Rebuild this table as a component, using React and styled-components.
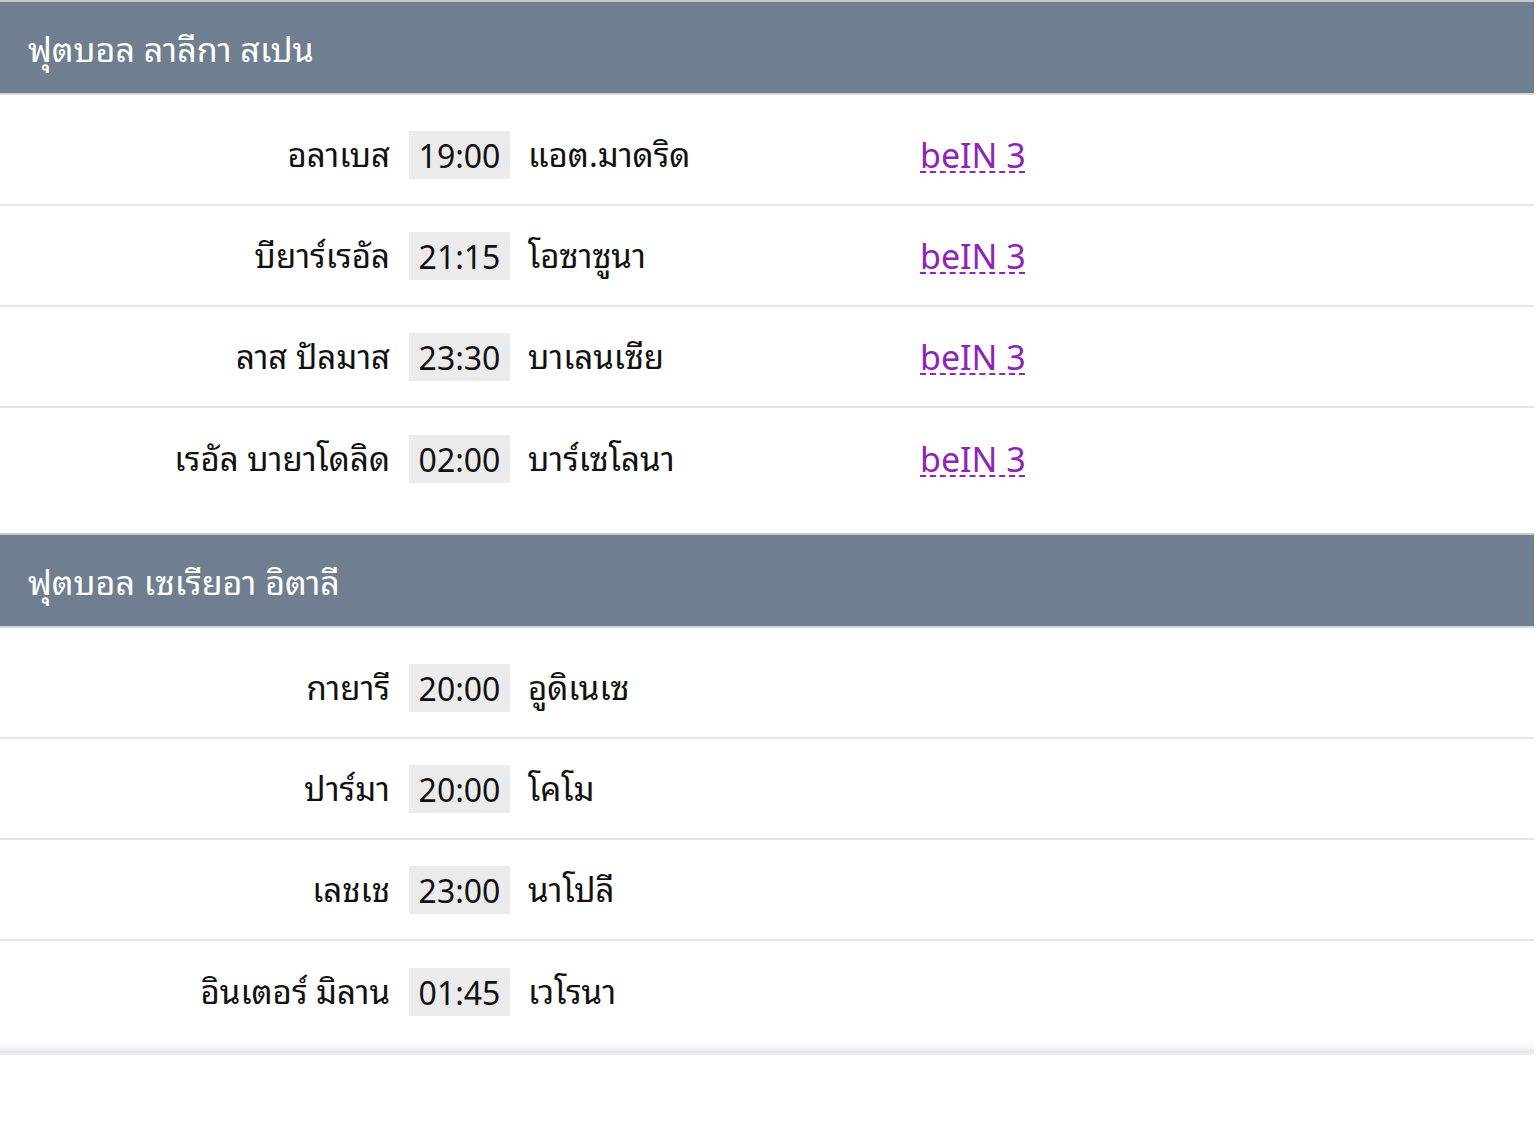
import React from "react";
import styled, { createGlobalStyle } from "styled-components";

const Global = createGlobalStyle`
  html, body { margin: 0; padding: 0; background: #fff; }
  body { font-family: "Noto Sans Thai Looped", "Leelawadee UI", Tahoma, "Noto Sans", "Noto Sans Thai", sans-serif; color: #111; }
`;

const Page = styled.div`
  width: 1534px;
`;

const Section = styled.section`
  padding-bottom: ${(p) => (p.$last ? "13px" : "24px")};
  background: #fff;
  ${(p) =>
    p.$last &&
    `background: linear-gradient(to bottom, #fff 0, #fff calc(100% - 14px), #f7f9fa calc(100% - 8px), #e3e7ec calc(100% - 3px), #eef1f4 100%);`}
`;

const Header = styled.h2`
  margin: 0;
  height: 95px;
  box-sizing: border-box;
  display: flex;
  align-items: center;
  padding: 0 0 2px 28px;
  background: #6f7f8f;
  border-top: 2px solid #c3c9cf;
  border-bottom: 2px solid #d3d8de;
  color: #fff;
  font-size: 34px;
  font-weight: 400;
`;

const Rows = styled.div`
  padding-top: 10px;
`;

const Row = styled.div`
  display: grid;
  grid-template-columns: 409px 101px 410px 1fr;
  align-items: center;
  height: 101px;
  box-sizing: border-box;
  border-bottom: ${(p) => (p.$noBorder ? "none" : "2px solid #e6e6e6")};
  font-size: 32px;
`;

const Home = styled.div`
  text-align: right;
  padding: 0 19px 5px 0;
  font-size: 33px;
  white-space: nowrap;
`;

const Time = styled.div`
  height: 48px;
  display: flex;
  align-items: center;
  justify-content: center;
  padding-bottom: 2px;
  box-sizing: border-box;
  background: #ebebeb;
`;

const Away = styled.div`
  padding: 0 0 5px 18px;
  font-size: 33px;
  white-space: nowrap;
`;

const ChannelCell = styled.div`
  padding-bottom: 5px;
`;

const Channel = styled.abbr`
  color: #8e24b8;
  font-size: 34px;
  text-decoration: underline dashed #8e24b8;
  text-decoration-thickness: 2px;
  text-underline-offset: 4px;
  cursor: help;
`;

const leagues = [
  {
    title: "ฟุตบอล ลาลีกา สเปน",
    matches: [
      ["อลาเบส", "19:00", "แอต.มาดริด", "beIN 3"],
      ["บียาร์เรอัล", "21:15", "โอซาซูนา", "beIN 3"],
      ["ลาส ปัลมาส", "23:30", "บาเลนเซีย", "beIN 3"],
      ["เรอัล บายาโดลิด", "02:00", "บาร์เซโลนา", "beIN 3"],
    ],
  },
  {
    title: "ฟุตบอล เซเรียอา อิตาลี",
    matches: [
      ["กายารี", "20:00", "อูดิเนเซ", ""],
      ["ปาร์มา", "20:00", "โคโม", ""],
      ["เลชเช", "23:00", "นาโปลี", ""],
      ["อินเตอร์ มิลาน", "01:45", "เวโรนา", ""],
    ],
  },
];

export default function App() {
  return (
    <Page>
      <Global />
      {leagues.map((l, li) => (
        <Section key={l.title} $last={li === leagues.length - 1}>
          <Header>{l.title}</Header>
          <Rows>
            {l.matches.map((m, i) => (
              <Row key={i} $noBorder={i === l.matches.length - 1}>
                <Home>{m[0]}</Home>
                <Time>{m[1]}</Time>
                <Away>{m[2]}</Away>
                <ChannelCell>{m[3] && <Channel title={m[3]}>{m[3]}</Channel>}</ChannelCell>
              </Row>
            ))}
          </Rows>
        </Section>
      ))}
    </Page>
  );
}
